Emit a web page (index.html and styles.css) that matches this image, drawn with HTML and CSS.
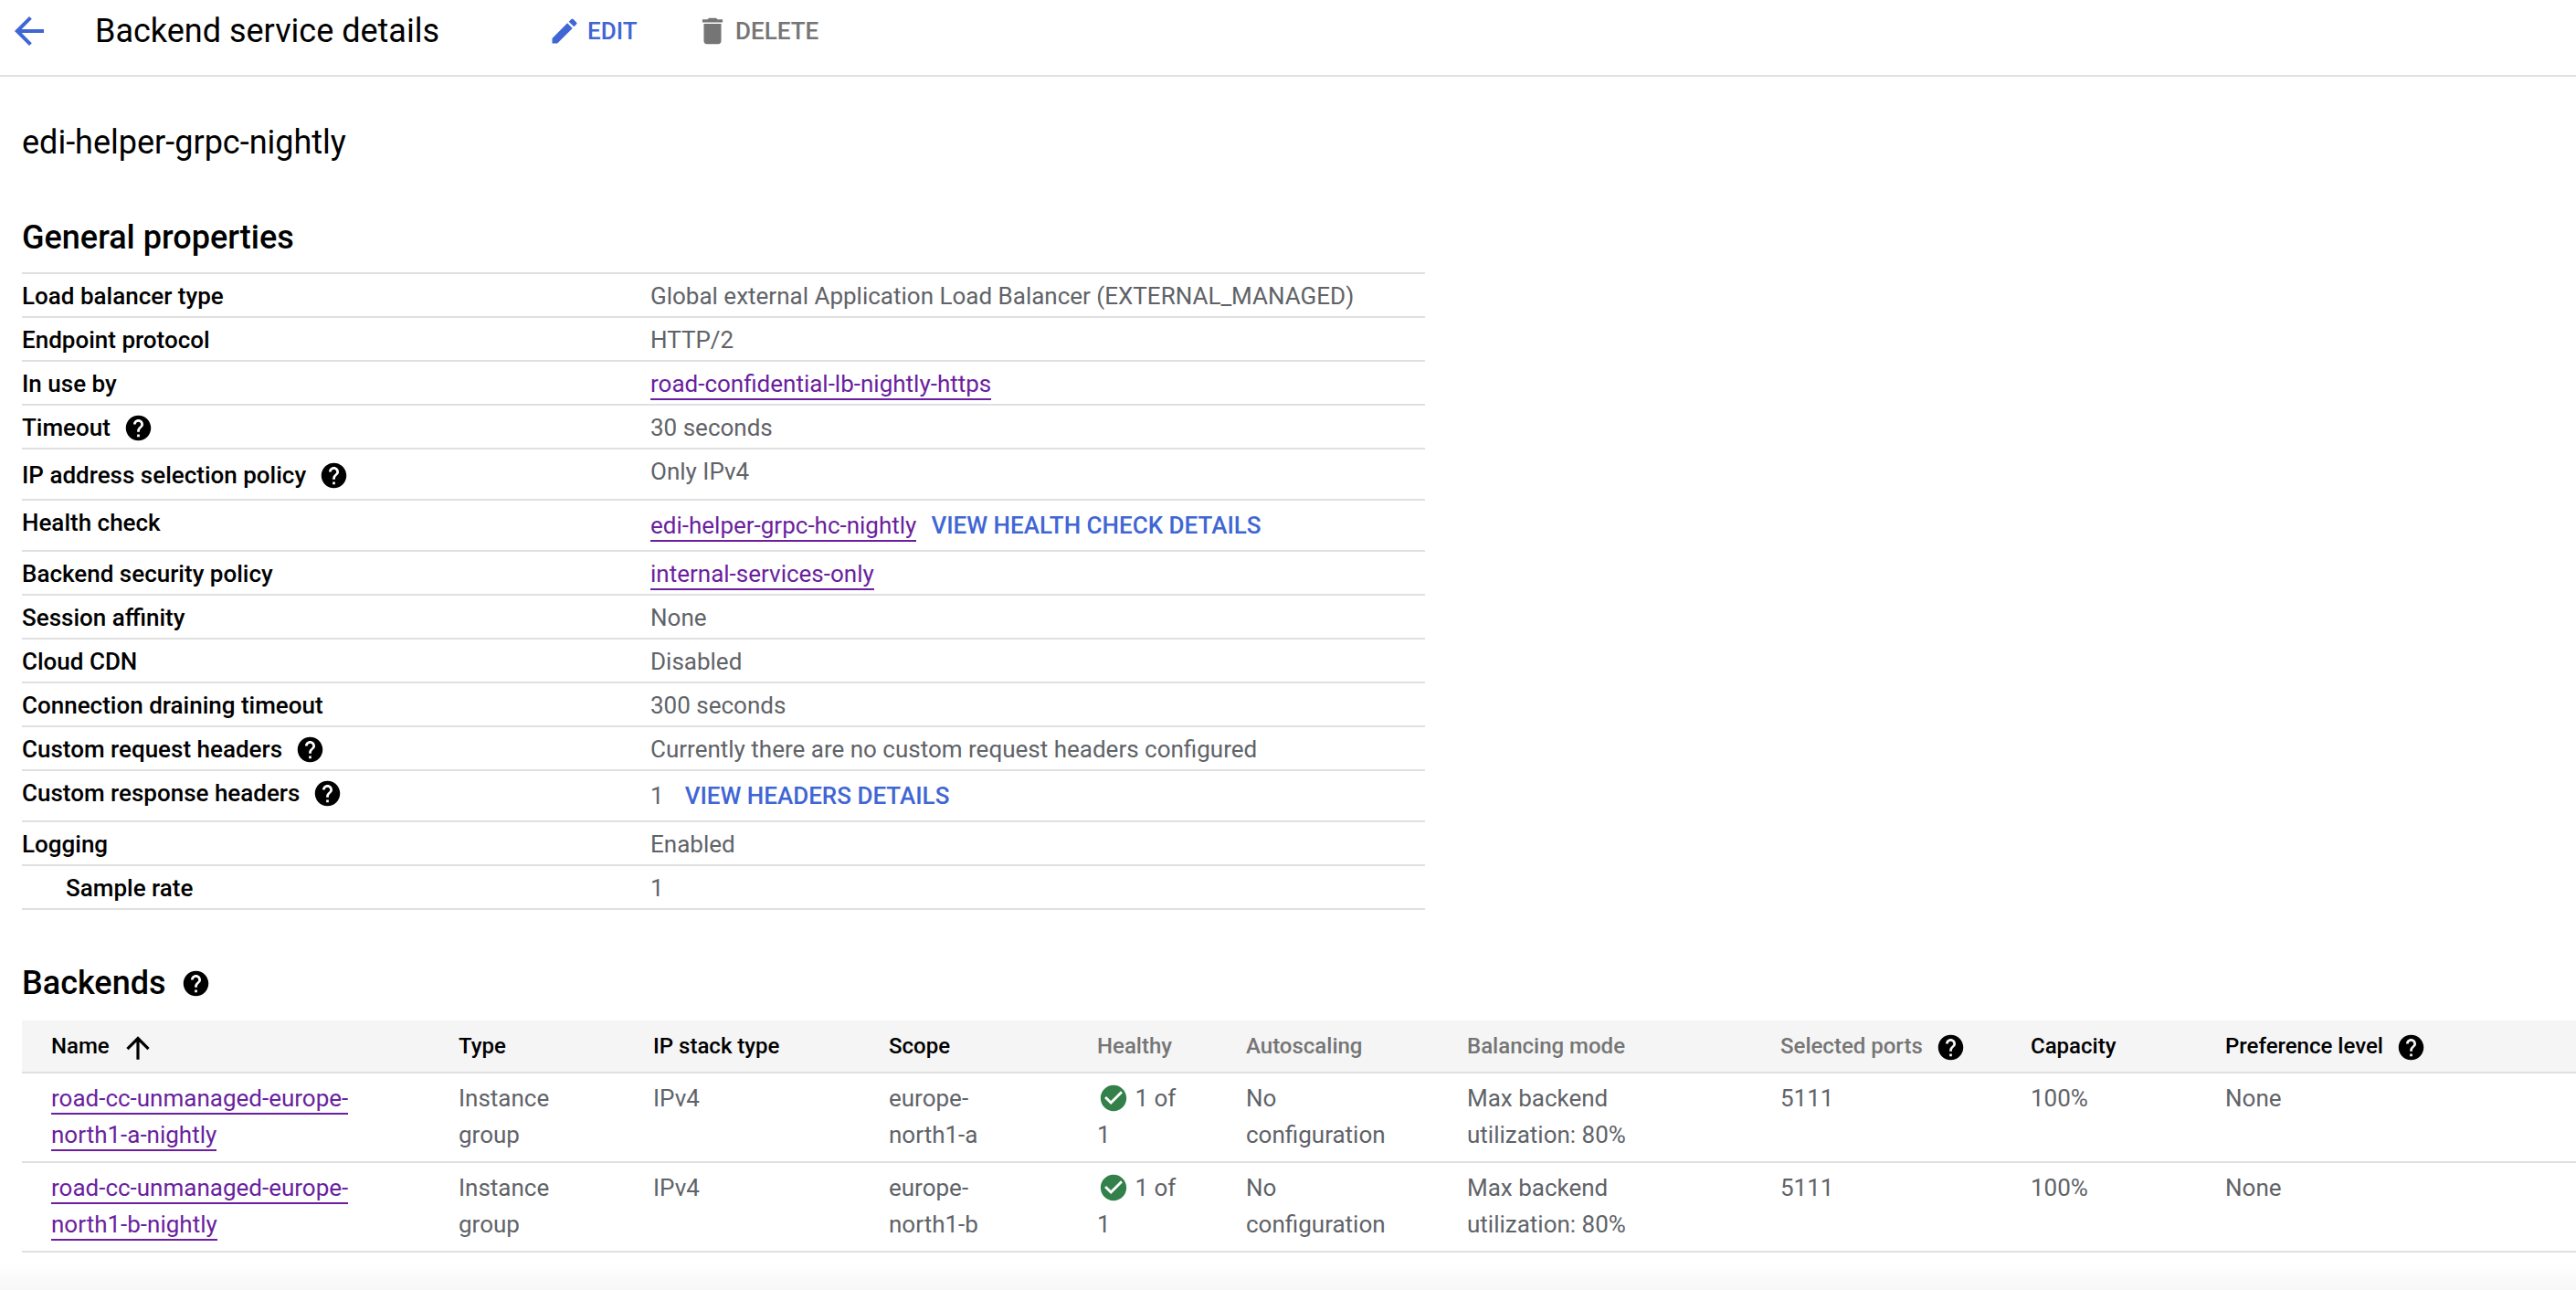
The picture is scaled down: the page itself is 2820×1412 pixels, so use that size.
FILE: index.html
```html
<!DOCTYPE html>
<html>
<head>
<meta charset="UTF-8" /><title>Backend service details</title>
<link rel="stylesheet" href="styles.css">
</head>
<body>
<svg class="defs" width="0" height="0">
	<symbol id="help" viewBox="0 0 24 24"><path d="M12 2C6.48 2 2 6.48 2 12s4.48 10 10 10 10-4.48 10-10S17.52 2 12 2zm1 17h-2v-2h2v2zm2.07-7.75l-.9.92C13.45 12.9 13 13.5 13 15h-2v-.5c0-1.1.45-2.1 1.17-2.83l1.24-1.26c.37-.36.59-.86.59-1.41 0-1.1-.9-2-2-2s-2 .9-2 2H8c0-2.21 1.79-4 4-4s4 1.79 4 4c0 .88-.36 1.68-.93 2.25z"/></symbol>
	<symbol id="ok" viewBox="0 0 24 24"><path d="M12 2C6.48 2 2 6.48 2 12s4.48 10 10 10 10-4.48 10-10S17.52 2 12 2zm-2 15l-5-5 1.41-1.41L10 14.17l7.59-7.59L19 8l-9 9z"/></symbol>
</svg>

<!-- header -->
<div class="topbar">
	<svg class="back" viewBox="0 0 24 24"><path d="M20 11H7.83l5.59-5.59L12 4l-8 8 8 8 1.41-1.41L7.83 13H20v-2z"/></svg>
	<div class="pagetitle">Backend service details</div>
	<span class="action edit">
		<svg viewBox="0 0 24 24"><path d="M3 17.25V21h3.75L17.81 9.94l-3.75-3.75L3 17.25zM20.71 7.04a1 1 0 0 0 0-1.41l-2.34-2.34a1 1 0 0 0-1.41 0l-1.83 1.83 3.75 3.75 1.83-1.83z"/></svg>
		EDIT
	</span>
	<span class="action del">
		<svg viewBox="0 0 24 24"><path d="M6 19c0 1.1.9 2 2 2h8c1.1 0 2-.9 2-2V7H6v12zM19 4h-3.5l-1-1h-5l-1 1H5v2h14V4z"/></svg>
		DELETE
	</span>
</div>

<div class="content">
	<div class="svcname">edi-helper-grpc-nightly</div>

	<h2 class="general">General properties</h2>
	<div class="props">
		<div class="row"><div class="key">Load balancer type</div><div class="val">Global external Application Load Balancer (EXTERNAL_MANAGED)</div></div>
		<div class="row"><div class="key">Endpoint protocol</div><div class="val">HTTP/2</div></div>
		<div class="row"><div class="key">In use by</div><div class="val"><a class="lnk">road-confidential-lb-nightly-https</a></div></div>
		<div class="row"><div class="key">Timeout <svg class="help"><use href="#help"/></svg></div><div class="val">30 seconds</div></div>
		<div class="row tall"><div class="key keylow">IP address selection policy <svg class="help"><use href="#help"/></svg></div><div class="val">Only IPv4</div></div>
		<div class="row tall"><div class="key">Health check</div><div class="val vallow"><a class="lnk">edi-helper-grpc-hc-nightly</a><span class="btn">VIEW HEALTH CHECK DETAILS</span></div></div>
		<div class="row"><div class="key">Backend security policy</div><div class="val"><a class="lnk">internal-services-only</a></div></div>
		<div class="row"><div class="key">Session affinity</div><div class="val">None</div></div>
		<div class="row"><div class="key">Cloud CDN</div><div class="val">Disabled</div></div>
		<div class="row"><div class="key">Connection draining timeout</div><div class="val">300 seconds</div></div>
		<div class="row"><div class="key">Custom request headers <svg class="help"><use href="#help"/></svg></div><div class="val">Currently there are no custom request headers configured</div></div>
		<div class="row tall"><div class="key">Custom response headers <svg class="help"><use href="#help"/></svg></div><div class="val vallow">1<span class="btn btnwide">VIEW HEADERS DETAILS</span></div></div>
		<div class="row"><div class="key">Logging</div><div class="val">Enabled</div></div>
		<div class="row"><div class="key sub">Sample rate</div><div class="val">1</div></div>
	</div>

	<h2 class="backends">Backends <svg class="help"><use href="#help"/></svg></h2>
	<table class="tbl">
		<colgroup>
			<col class="c1"><col class="c2"><col class="c3"><col class="c4"><col class="c5"><col class="c6"><col class="c7"><col class="c8"><col class="c9"><col>
		</colgroup>
		<thead>
			<tr>
				<th>Name <svg class="sort" viewBox="0 0 24 24"><path d="M4 12l1.41 1.41L11 7.83V20h2V7.83l5.58 5.59L20 12l-8-8-8 8z"/></svg></th>
				<th>Type</th>
				<th>IP stack type</th>
				<th>Scope</th>
				<th class="dim">Healthy</th>
				<th class="dim">Autoscaling</th>
				<th class="dim">Balancing mode</th>
				<th class="dim">Selected ports <svg class="help"><use href="#help"/></svg></th>
				<th>Capacity</th>
				<th>Preference level <svg class="help"><use href="#help"/></svg></th>
			</tr>
		</thead>
		<tbody>
			<tr>
				<td><a class="lnk">road-cc-unmanaged-europe-north1-a-nightly</a></td>
				<td>Instance group</td>
				<td>IPv4</td>
				<td>europe-north1-a</td>
				<td><svg class="ok"><use href="#ok"/></svg> 1 of 1</td>
				<td>No configuration</td>
				<td>Max backend utilization: 80%</td>
				<td>5111</td>
				<td>100%</td>
				<td>None</td>
			</tr>
			<tr>
				<td><a class="lnk">road-cc-unmanaged-europe-north1-b-nightly</a></td>
				<td>Instance group</td>
				<td>IPv4</td>
				<td>europe-north1-b</td>
				<td><svg class="ok"><use href="#ok"/></svg> 1 of 1</td>
				<td>No configuration</td>
				<td>Max backend utilization: 80%</td>
				<td>5111</td>
				<td>100%</td>
				<td>None</td>
			</tr>
		</tbody>
	</table>
</div>
<div class="fade"></div>
</body>
</html>
```
FILE: styles.css
```css
* {
	padding: 0;
	margin: 0;
	box-sizing: border-box;
}
html {
	height: 100%;
}
body {
	font: 26px Roboto, sans-serif;
	color: #202124;
	background: #fff;
	height: 100%;
	overflow: hidden;
	position: relative;
}
.defs {
	position: absolute;
}

/* header */
.topbar {
	height: 84px;
	border-bottom: 2px solid #e0e0e0;
	display: flex;
	align-items: center;
	padding: 0 0 14px 8px;
}
.back {
	width: 48px;
	height: 48px;
	fill: #3f66d4;
}
.pagetitle {
	font-size: 36px;
	color: #000;
	margin-left: 48px;
	width: 496px;
}
.action {
	display: flex;
	align-items: center;
	font-weight: 500;
	font-size: 26px;
}
.action svg {
	width: 36px;
	height: 36px;
	margin-right: 7px;
}
.edit {
	color: #3f66d4;
	width: 161px;
}
.edit svg {
	fill: #3f66d4;
}
.del {
	color: #757575;
}
.del svg {
	fill: #757575;
	width: 38px;
	height: 38px;
	margin-right: 6px;
}

/* main */
.content {
	padding-left: 24px;
}
.svcname {
	font-size: 36px;
	color: #000;
	height: 44px;
	line-height: 44px;
	margin-top: 50px;
}
h2 {
	font-size: 36px;
	font-weight: 500;
	color: #000;
}
.general {
	margin-top: 60px;
	height: 60px;
	line-height: 44px;
}
.props {
	width: 1536px;
	border-top: 2px solid #e0e0e0;
}
.row {
	display: flex;
	height: 48px;
	border-bottom: 2px solid #e0e0e0;
}
.row.tall {
	height: 56px;
}
.key {
	width: 688px;
	font-weight: 500;
	color: #000;
	line-height: 48px;
	display: flex;
	align-items: flex-start;
}
.keylow {
	line-height: 56px;
}
.sub {
	padding-left: 48px;
}
.val {
	color: #5f6368;
	line-height: 48px;
	font-size: 26px;
}
.vallow {
	padding-top: 3px;
}
.lnk {
	color: #6a1f9e;
	border-bottom: 2px solid #6a1f9e;
	padding-bottom: 1px;
}
.btn {
	color: #3f66d4;
	font-weight: 500;
	margin-left: 16px;
}
.btnwide {
	margin-left: 23px;
}
.help {
	width: 33px;
	height: 33px;
	fill: #000;
	flex: none;
	vertical-align: middle;
}
.key .help {
	margin: 8px 0 0 14px;
}
.keylow .help {
	margin-top: 12px;
}

.backends {
	margin-top: 55px;
	height: 50px;
	line-height: 50px;
	display: flex;
	align-items: center;
}
.backends .help {
	margin-left: 17px;
}

/* backends table */
.tbl {
	table-layout: fixed;
	border-collapse: collapse;
	width: 2796px;
	margin-top: 16px;
}
.c1 { width: 478px; }
.c2 { width: 213px; }
.c3 { width: 258px; }
.c4 { width: 228px; }
.c5 { width: 163px; }
.c6 { width: 242px; }
.c7 { width: 343px; }
.c8 { width: 274px; }
.c9 { width: 213px; }
.tbl th {
	background: #f5f5f5;
	height: 57px;
	text-align: left;
	font-weight: 500;
	font-size: 24px;
	color: #000;
	border-bottom: 2px solid #e0e0e0;
	vertical-align: middle;
	white-space: nowrap;
}
.tbl th.dim {
	color: #757575;
}
.tbl th:first-child, .tbl td:first-child {
	padding-left: 32px;
}
.tbl td {
	color: #5f6368;
	line-height: 40px;
	height: 98px;
	padding: 7px 64px 9px 0;
	vertical-align: top;
	border-bottom: 2px solid #e0e0e0;
}
.tbl td:nth-child(5) {
	padding-right: 72px;
}
.tbl td:nth-child(7) {
	padding-right: 160px;
}
.sort {
	width: 38px;
	height: 38px;
	fill: #000;
	vertical-align: middle;
	margin: -8px 0 -8px 6px;
}
.tbl th .help {
	margin: -8px 0 -8px 8px;
}
.ok {
	width: 34px;
	height: 34px;
	fill: #34804a;
	vertical-align: middle;
	margin: -4px 0 0 1px;
}
.fade {
	position: absolute;
	left: 0;
	right: 0;
	bottom: 0;
	height: 30px;
	background: linear-gradient(#fff, #f7f7f7);
}
```
